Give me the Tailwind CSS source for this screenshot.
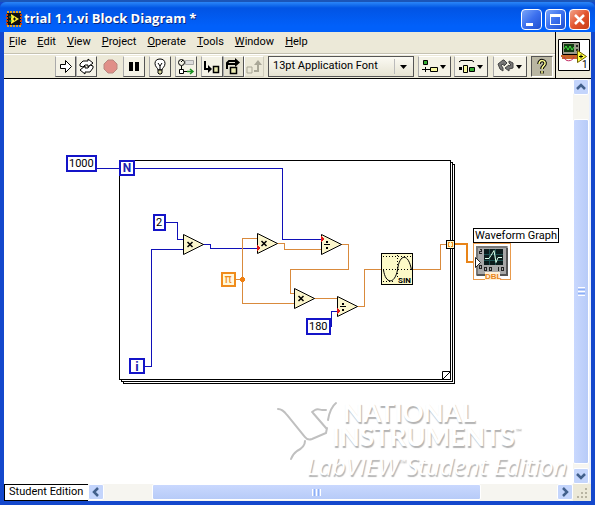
<!DOCTYPE html>
<html lang="en" class="h-full">
<head>
    <meta charset="utf-8">
    <title>trial 1.1.vi Block Diagram *</title>
    <script src="https://cdn.jsdelivr.net/npm/@tailwindcss/browser@4"></script>
</head>
<body class="h-full overflow-hidden bg-[#1448cc] font-['Roboto',sans-serif] text-[11px] text-black">
<div class="flex h-full flex-col border-t-2 border-[#1b55b8]">

    <!-- title bar -->
    <header class="flex h-[30px] shrink-0 items-center rounded-t-md bg-linear-to-b from-[#2b86f8] from-0% via-[#0254e4] via-20% to-[#0160fa] to-80% pt-1 pr-[5px] pl-[6px]">
        <svg class="size-4" viewBox="0 0 16 16" aria-hidden="true">
            <path d="M1 2h14v12H1z" fill="#111"/>
            <path d="M1 1h14M1 15h14" stroke="#e0a020" stroke-width="2" stroke-dasharray="2 1"/>
            <path d="M1 3v11M15 3v11" stroke="#c04010" stroke-width="2" stroke-dasharray="2 1"/>
            <path d="M5 3l8 5-8 5z" fill="#ffee30"/>
            <path d="M3 6h3M3 10h3" stroke="#30b050"/>
            <path d="M7 8h3M8.500 6.500v3" stroke="#111"/>
        </svg>
        <h1 class="flex-1 pl-[2px] font-['Open_Sans',sans-serif] text-[13px] font-bold whitespace-nowrap text-white [text-shadow:1px_1px_#0a2a80]">trial 1.1.vi Block Diagram *</h1>
        <div class="flex gap-[3px]">
            <button aria-label="Minimize" class="size-[21px] rounded-sm border border-white bg-linear-to-br from-[#7ba4f8] via-[#3b6fee] to-[#1f4fd0]">
                <svg viewBox="0 0 19 19"><path d="M4 13h7v3H4z" fill="#fff"/></svg>
            </button>
            <button aria-label="Maximize" class="size-[21px] rounded-sm border border-white bg-linear-to-br from-[#7ba4f8] via-[#3b6fee] to-[#1f4fd0]">
                <svg viewBox="0 0 19 19"><path d="M4 4h11v11H4zM5 7v7h9V7z" fill="#fff" fill-rule="evenodd"/></svg>
            </button>
            <button aria-label="Close" class="size-[21px] rounded-sm border border-white bg-linear-to-br from-[#f0a088] via-[#e3552e] to-[#c83c14]">
                <svg viewBox="0 0 19 19"><path d="M5 5l9 9M14 5l-9 9" stroke="#fff" stroke-width="2.500"/></svg>
            </button>
        </div>
    </header>

    <div class="mr-1 mb-1 ml-1 flex min-h-0 flex-1 flex-col">
        <!-- menu and toolbar -->
        <div class="flex h-[47px] shrink-0 border-b border-black bg-[#ece9d8]">
            <div class="flex min-w-0 flex-1 flex-col">
                <nav class="flex h-[22px] items-center gap-[11px] border-b border-[#c5c2b2] pl-[5px]">
                    <button><u>F</u>ile</button>
                    <button><u>E</u>dit</button>
                    <button><u>V</u>iew</button>
                    <button><u>P</u>roject</button>
                    <button><u>O</u>perate</button>
                    <button><u>T</u>ools</button>
                    <button><u>W</u>indow</button>
                    <button><u>H</u>elp</button>
                </nav>
                <div class="flex flex-1 items-center border-t border-white pr-[2px] pl-[51px]">
                    <button aria-label="Run" class="h-[21px] w-[21px] border border-t-white border-r-[#555] border-b-[#555] border-l-[#aaa] bg-[#f4f2e6]">
                        <svg viewBox="0 0 19 19" fill="#fff" stroke="#000"><path d="M4.500 7.500h5v-4l6 6-6 6v-4h-5z"/></svg>
                    </button>
                    <button aria-label="Run Continuously" class="h-[21px] w-[21px] border border-t-white border-r-[#555] border-b-[#555] border-l-[#aaa] bg-[#f4f2e6]">
                        <svg viewBox="0 0 19 19" fill="#fff" stroke="#000"><path d="M3 9V7l3-3h5V2l5 4-5 4V8H8l-2 2z"/><path d="M16 9v2l-3 4H8v2l-5-4 5-4v2h3l2-3z"/></svg>
                    </button>
                    <button aria-label="Abort" class="mx-1 h-[21px] w-[18px]">
                        <svg viewBox="0 0 18 21"><path d="M7 4h5l4 4v5l-4 4H7l-4-4V8z" fill="#e08f88" stroke="#b88880"/></svg>
                    </button>
                    <button aria-label="Pause" class="mr-1 h-[21px] w-[22px] border border-t-white border-r-[#555] border-b-[#555] border-l-[#aaa] bg-[#f4f2e6]">
                        <svg viewBox="0 0 20 19"><path d="M5 5h4v9H5zM11 5h4v9h-4z"/></svg>
                    </button>
                    <button aria-label="Highlight Execution" class="mr-1 h-[21px] w-[22px] border border-t-white border-r-[#555] border-b-[#555] border-l-[#aaa] bg-[#f4f2e6]">
                        <svg viewBox="0 0 20 19" fill="#fff" stroke="#000"><path d="M8 13c0-2-3-3-3-6.500C5 3.500 7 2 10 2s5 1.500 5 4.500c0 3.500-3 4.500-3 6.500z"/><path d="M8 6l2 3 2-3M10 9v4" fill="none"/><path d="M8 13h4v3l-1 1H9l-1-1z" fill="#d8d8a0"/></svg>
                    </button>
                    <button aria-label="Retain Wire Values" class="mr-1 h-[21px] w-[22px] border border-t-white border-r-[#555] border-b-[#555] border-l-[#aaa] bg-[#f4f2e6]">
                        <svg viewBox="0 0 20 19" fill="none" stroke="#000"><circle cx="5.500" cy="5.500" r="3"/><path d="M5 5l2-2M5.500 9v5M3 14.500h13"/><path d="M9.500 3.500h8v4h-8z" fill="#ddd" stroke="#aaa"/><path d="M3.500 12.500h4v4h-4z" fill="#fff"/><path d="M11 14.500h6M14 12l3 2.500-3 2.500" stroke="#1a9020" stroke-width="1.500"/></svg>
                    </button>
                    <button aria-label="Step Into" class="h-[21px] w-[22px] border border-t-white border-r-[#555] border-b-[#555] border-l-[#aaa] bg-[#f4f2e6]">
                        <svg viewBox="0 0 20 19" fill="none" stroke="#000" stroke-width="2"><path d="M3 4v8h5"/><path d="M6 8l4 4-4 4z" fill="#000" stroke="none"/><path d="M11.500 9.500h5v6h-5z" fill="#e8e8b0" stroke-width="1.500"/></svg>
                    </button>
                    <button aria-label="Step Over" class="h-[21px] w-[21px] border border-t-white border-r-[#555] border-b-[#555] border-l-[#aaa] bg-[#e4e1d0]">
                        <svg viewBox="0 0 19 19" fill="none" stroke="#000" stroke-width="2"><path d="M3 12V6l2-2h7"/><path d="M3 7h9"/><path d="M11 1l5 4.500-5 4.500z" fill="#000" stroke="none"/><path d="M6.500 10.500h6v6h-6z" fill="#e8e8b0" stroke-width="1.500"/></svg>
                    </button>
                    <button aria-label="Step Out" disabled class="mr-1 h-[21px] w-[20px] border border-t-white border-r-[#d0cdbd] border-b-[#d0cdbd] border-l-white">
                        <svg viewBox="0 0 18 19" fill="none" stroke="#a9a797" stroke-width="2"><path d="M2 10h5v6H2z" stroke-width="1"/><path d="M9 14h4V7"/><path d="M9 8l4-5 4 5z" fill="#a9a797" stroke="none"/></svg>
                    </button>
                    <div class="relative mr-1 h-[21px] w-[146px]">
                        <select aria-label="Text Settings" class="h-full w-full appearance-none border border-[#555] bg-linear-to-b from-[#fbfaf3] to-[#e6e3d2] pl-1">
                            <option>13pt Application Font</option>
                        </select>
                        <svg class="pointer-events-none absolute top-0 right-0 h-[21px] w-5" viewBox="0 0 20 21"><path d="M.5 3v15" stroke="#bbb"/><path d="M6 9h7l-3.500 4z"/></svg>
                    </div>
                    <button aria-label="Align Objects" class="mr-[3px] h-[21px] w-[33px] border border-t-white border-r-[#555] border-b-[#555] border-l-[#aaa] bg-[#f4f2e6]">
                        <svg viewBox="0 0 31 19"><path d="M4.500 3.500h4v4h-4z" fill="#3a3" stroke="#000"/><path d="M3 12.500h8M6.500 10v5" stroke="#000"/><path d="M11.500 10.500h7v4h-7z" fill="#f8f8a0" stroke="#000"/><path d="M21 8h6l-3 4z"/></svg>
                    </button>
                    <button aria-label="Distribute Objects" class="mr-[5px] h-[21px] w-[34px] border border-t-white border-r-[#555] border-b-[#555] border-l-[#aaa] bg-[#f4f2e6]">
                        <svg viewBox="0 0 32 19"><path d="M4 5l2-1.500h11L19 5" fill="none" stroke="#000"/><path d="M4 10h3v3H4z"/><path d="M8.500 8.500h4v7h-4z" fill="#f8f8a0" stroke="#000"/><path d="M14.500 10.500h5v4h-5z" fill="#3a3" stroke="#000"/><path d="M22 8h6l-3 4z"/></svg>
                    </button>
                    <button aria-label="Reorder" class="mr-1 h-[21px] w-[34px] border border-t-white border-r-[#555] border-b-[#555] border-l-[#aaa] bg-[#f4f2e6]">
                        <svg viewBox="0 0 32 19" fill="#777" stroke="#444"><path d="M9 3L4 7l2 5 3 2v-3L7 8l3-1v2l3-3-3-3z"/><path d="M15 4l4 2v5l-4 1v2l-4-3 4-3v1l2-1-2-2z"/><path d="M22 8h6l-3 4z" fill="#000" stroke="none"/></svg>
                    </button>
                    <button aria-label="Context Help" aria-pressed="true" class="h-[21px] w-[22px] border border-t-[#555] border-r-white border-b-white border-l-[#555] bg-[#b9b6a2]">
                        <svg viewBox="0 0 20 19" fill="none"><path d="M7 7c0-5 7-4 6 0-.5 2-3 2-3 5M10 14v2.500" stroke="#000" stroke-width="3.500"/><path d="M7 7c0-5 7-4 6 0-.5 2-3 2-3 5M10 14v2.500" stroke="#ffff90" stroke-width="1.500"/></svg>
                    </button>
                </div>
            </div>
            <div class="flex w-[36px] justify-center border-l border-black pt-[7px]">
                <svg class="size-8 bg-white" viewBox="0 0 32 32" role="img" aria-label="VI icon">
                    <path d="M.5.5h31v31H.5z" fill="none" stroke="#000"/>
                    <path d="M4.500 3.500h17v12h-17z" fill="#9a9a8a" stroke="#000"/>
                    <path d="M6 5h10v8H6z" fill="#123c12"/>
                    <path d="M6 10l2-3 2 4 2-4 2 4 2-3" fill="none" stroke="#40e040"/>
                    <circle cx="19" cy="7" r="1"/><circle cx="19" cy="11" r="1"/>
                    <path d="M3 17h16M4 19h15" stroke="#c86428" stroke-width="2"/>
                    <path d="M6 18c1 5 8 5 10 0" fill="none" stroke="#c02860"/>
                    <path d="M19.500 11.500l9 6-9 6z" fill="#ffff40" stroke="#706000"/>
                    <path d="M21 17.500h4M23 15.500v4" stroke="#000"/>
                    <text x="24" y="29" font-size="10">1</text>
                </svg>
            </div>
        </div>

        <div class="flex min-h-0 flex-1">
            <!-- block diagram -->
            <main class="relative min-w-0 flex-1 overflow-hidden bg-white">
                <svg class="absolute top-0 left-0 h-[405px] w-[569px]" viewBox="4 79 569 405" fill="none" shape-rendering="crispEdges">
                    <!-- for loop frame -->
                    <g stroke="#000">
                        <path d="M119.500 160.500h331v219h-331z"/>
                        <path d="M450.500 162.500h2v219h-331v-2M452.500 164.500h2v219h-331v-2"/>
                        <path d="M442.500 379v-7.500h8l-8 8" shape-rendering="auto"/>
                    </g>
                    <!-- integer wires -->
                    <g stroke="#1010b8">
                        <path d="M96 168.500h186.500v70.500h39"/>
                        <path d="M165 222.500h12.500v17h6"/>
                        <path d="M145 366.500h6.500v-117h32"/>
                        <path d="M203 244.500h7.500v3.500h47"/>
                        <path d="M330 326.500h1.500v-15h6"/>
                    </g>
                    <!-- floating point wires -->
                    <g stroke="#d98a3c">
                        <path d="M236 279.500h6.500M257 238.500h-14.500v65h52"/>
                        <path d="M277 243.500h7.500v6h37"/>
                        <path d="M341 244.500h7.500v25h-58v24h5"/>
                        <path d="M314 298.500h23"/>
                        <path d="M357 306.500h7.500v-37h17M413 269.500h27.500v-25h6"/>
                        <path d="M455 244h12v18h9" stroke="#e88418" stroke-width="2"/>
                    </g>
                    <circle cx="242.500" cy="279.500" r="2.500" fill="#f08010"/>
                    <!-- arithmetic nodes -->
                    <g fill="#fbf6cc" stroke="#000" shape-rendering="auto">
                        <path d="M183.500 234.500v20l20-10z"/>
                        <path d="M257.500 233.500v20l20-10z"/>
                        <path d="M321.500 234.500v20l20-10z"/>
                        <path d="M294.500 288.500v20l20-10z"/>
                        <path d="M337.500 296.500v20l20-10z"/>
                    </g>
                    <g stroke="#000" stroke-width="1.500" shape-rendering="auto">
                        <path d="M187.500 242l5 5M192.500 242l-5 5M261.500 241l5 5M266.500 241l-5 5M298.500 296l5 5M303.500 296l-5 5"/>
                    </g>
                    <path d="M324 244h6v1h-6zM326 241h2v2h-2zM326 247h2v2h-2zM340 306h6v1h-6zM342 303h2v2h-2zM342 309h2v2h-2z" fill="#000"/>
                    <path d="M257 245l4 3-4 3zM321 236l4 3-4 3zM337 308l4 3-4 3z" fill="#e01818"/>
                    <!-- loop terminals -->
                    <g fill="#fff" stroke="#1414c8" stroke-width="2">
                        <path d="M120 161h14v14h-14zM130 359h14v14h-14z"/>
                    </g>
                    <g fill="#2020b0" font-weight="bold" text-anchor="middle">
                        <text x="127" y="172" font-size="12">N</text>
                        <text x="137" y="371" font-size="13">i</text>
                    </g>
                    <path d="M222 273h13v13h-13z" fill="#fff8dc" stroke="#f08c1c" stroke-width="2"/>
                    <text x="228" y="283" fill="#f08c1c" font-size="12" font-family="DejaVu Sans" text-anchor="middle">π</text>
                    <path d="M446.500 240.500h8v8h-8z" fill="#fff8c8" stroke="#000"/>
                    <path d="M450 242.500h-1.500v4h1.500M451 242.500h1.500v4h-1.500" stroke="#f08c1c"/>
                    <!-- sine -->
                    <path d="M381.500 253.500h31v31h-31z" fill="#fdfac8" stroke="#000"/>
                    <path d="M383 256.500h28M383 269.500h28M383 281.500h12M397.500 255v22" stroke="#000" stroke-dasharray="1 2"/>
                    <path d="M383.500 270c2 14 11 15 14 0 2-17 11-17 14 0" stroke="#000" shape-rendering="auto"/>
                    <text x="398" y="283" fill="#000" font-size="8" font-weight="bold">SIN</text>
                    <!-- waveform graph terminal -->
                    <path d="M473.500 243.500h37v36h-37z" fill="#fff" stroke="#e89a4c"/>
                    <path d="M476 246h32v30h-32z" fill="#a8a8a8"/>
                    <path d="M477 275V247h30" stroke="#777" stroke-width="2"/>
                    <path d="M507 248v27h-30" stroke="#555" stroke-width="2"/>
                    <path d="M484 249h19v16h-19z" fill="#0c1c1c"/>
                    <path d="M489.500 249v16M495.500 249v16M484 254.500h19M484 260.500h19" stroke="#1e5050"/>
                    <path d="M485 258.500h4l2-3 3-5 2 12 2-5h4" stroke="#d8ffe8" shape-rendering="auto"/>
                    <path d="M479.500 249.500h2v2h-2v2h2M479.500 265.500h2v3h-2zM484.500 267.500h2v3h-2zM489.500 267.500h2v3h-2zM498.500 267v4M501.500 267.500h2v3h-2z" stroke="#222"/>
                    <path d="M475.500 257.500l5 5-5 5z" fill="#fff" stroke="#222" shape-rendering="auto"/>
                    <path d="M485 272h15v8h-15z" fill="#fff0d8"/>
                    <text x="485" y="279" fill="#e88418" font-size="8" font-weight="bold" font-family="Liberation Sans">DBL</text>
                    <!-- eagle mark: shaded lower edges of the wings -->
                    <g class="blur-[0.5px]" stroke="#c0c0c0" stroke-width="2" stroke-linecap="round" shape-rendering="auto">
                        <path d="M278 409c4 0 6 2 9 6l18 22c2 3 4 3 7 2l14-6 1-5"/>
                        <path d="M305 441c0 5-4 8-8 10-4 3-5 5-6 8"/>
                        <path d="M312 412l3-2c3-2 5 0 7 0h4M313 413l13 15"/>
                        <path d="M336 403c-5 4-7 11-8 17"/>
                    </g>
                </svg>

                <input aria-label="Loop count" value="1000" class="absolute top-[76px] left-[62px] h-[17px] w-[31px] border-2 border-[#1414c8] bg-white px-px leading-none">
                <input aria-label="Multiplier" value="2" class="absolute top-[135px] left-[149px] h-[17px] w-[13px] border-2 border-[#1414c8] bg-white px-px leading-none">
                <input aria-label="Divisor" value="180" class="absolute top-[239px] left-[302px] h-[17px] w-[25px] border-2 border-[#1414c8] bg-white px-px leading-none">
                <span class="absolute top-[149px] left-[469px] h-[15px] border border-black bg-white px-px leading-[14px] whitespace-nowrap">Waveform Graph</span>

                <div class="absolute right-1 bottom-0 w-[262px] font-['Lato',sans-serif] text-[26px] leading-[24px] font-bold whitespace-nowrap text-white [text-shadow:1px_2px_1px_#b4b4b4]">
                    <p class="pl-[36px]">NATIONAL</p>
                    <p class="pl-[25px]">INSTRUMENTS<sup class="top-[-13px] text-[8px]">™</sup></p>
                    <p class="font-['Open_Sans',sans-serif] text-[24px] leading-[36px] font-normal italic">LabVIEW<sup class="top-[-10px] text-[10px]">™</sup>Student Edition</p>
                </div>
            </main>

            <!-- vertical scrollbar -->
            <div class="flex w-[18px] shrink-0 flex-col items-center border-r-2 border-r-[#e9f0ff] bg-[#f6f5f0]">
                <button aria-label="Scroll up" class="size-4 shrink-0 rounded-xs border border-white bg-[#c4d5fc]">
                    <svg viewBox="0 0 14 14" fill="none"><path d="M3 9l4-4 4 4" stroke="#42608c" stroke-width="2.500"/></svg>
                </button>
                <div class="mt-6 flex w-4 flex-1 flex-col items-center justify-center gap-px rounded-xs border border-white bg-linear-to-r from-[#c9d8fe] to-[#b7cbf8]">
                    <i class="h-px w-[7px] bg-white"></i><i class="h-px w-[7px] bg-[#8cb0f8]"></i><i class="h-px w-[7px] bg-white"></i><i class="h-px w-[7px] bg-[#8cb0f8]"></i><i class="h-px w-[7px] bg-white"></i>
                </div>
                <button aria-label="Scroll down" class="mt-1 size-4 shrink-0 rounded-xs border border-white bg-[#c4d5fc]">
                    <svg viewBox="0 0 14 14" fill="none"><path d="M3 5l4 4 4-4" stroke="#42608c" stroke-width="2.500"/></svg>
                </button>
            </div>
        </div>

        <!-- status label and horizontal scrollbar -->
        <div class="flex h-[17px] shrink-0 bg-[#f6f5f0]">
            <span class="w-[84px] shrink-0 border border-r-0 border-black bg-white pl-1 leading-[14px] whitespace-nowrap">Student Edition</span>
            <button aria-label="Scroll left" class="size-4 shrink-0 rounded-xs border border-white bg-[#c4d5fc]">
                <svg viewBox="0 0 14 14" fill="none"><path d="M9 3L5 7l4 4" stroke="#42608c" stroke-width="2.500"/></svg>
            </button>
            <div class="mr-[76px] ml-12 flex h-4 flex-1 items-center justify-center gap-px rounded-xs border border-white bg-linear-to-b from-[#c9d8fe] to-[#b7cbf8]">
                <i class="h-[7px] w-px bg-white"></i><i class="h-[7px] w-px bg-[#8cb0f8]"></i><i class="h-[7px] w-px bg-white"></i><i class="h-[7px] w-px bg-[#8cb0f8]"></i><i class="h-[7px] w-px bg-white"></i>
            </div>
            <button aria-label="Scroll right" class="size-4 shrink-0 rounded-xs border border-white bg-[#c4d5fc]">
                <svg viewBox="0 0 14 14" fill="none"><path d="M5 3l4 4-4 4" stroke="#42608c" stroke-width="2.500"/></svg>
            </button>
            <svg class="h-[17px] w-[18px] shrink-0 bg-[#ece9d8]" viewBox="0 0 18 17"><path d="M12 4h2v2h-2zM8 8h2v2H8zM12 8h2v2h-2zM4 12h2v2H4zM8 12h2v2H8zM12 12h2v2h-2z" fill="#b8b4a2"/></svg>
        </div>
    </div>
</div>
</body>
</html>
